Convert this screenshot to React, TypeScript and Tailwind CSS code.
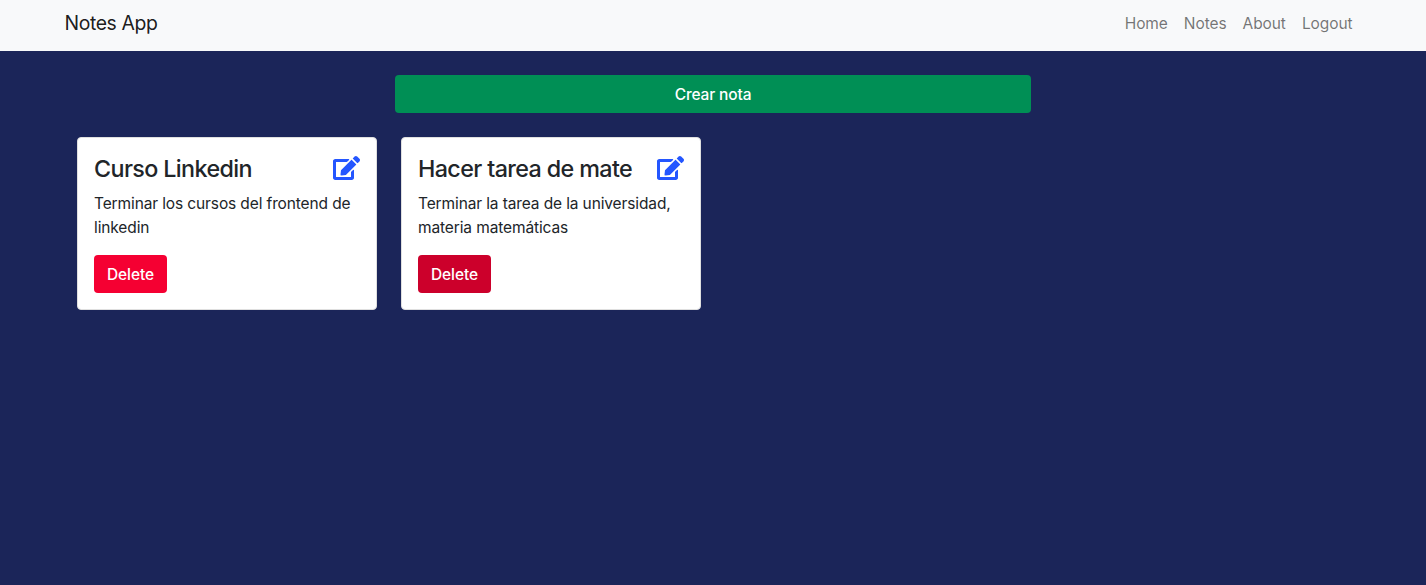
import { FaEdit } from "react-icons/fa";

type Note = { title: string; text: string; buttonClass: string };

const notes: Note[] = [
  {
    title: "Curso Linkedin",
    text: "Terminar los cursos del frontend de linkedin",
    buttonClass: "bg-[#f50032]",
  },
  {
    title: "Hacer tarea de mate",
    text: "Terminar la tarea de la universidad, materia matemáticas",
    buttonClass: "bg-[#cc002b]",
  },
];

const links = ["Home", "Notes", "About", "Logout"];

function NoteCard({ note }: { note: Note }) {
  return (
    <article className="h-[173px] w-[300px] rounded border border-[#dfdfdf] bg-white p-4">
      <div className="flex justify-between">
        <h5 className="mb-2 whitespace-nowrap text-[23.3px] leading-[29px] font-medium tracking-[-0.61px]">{note.title}</h5>
        <FaEdit className="mt-[2px] h-6 w-[27px] shrink-0 text-[#2456ff]" />
      </div>
      <p className="mt-px mb-[15px] h-12 text-[15.5px] leading-6 tracking-[-0.12px]">{note.text}</p>
      <button className={`h-[38px] w-[73px] rounded pt-[2px] text-[15.5px] leading-6 font-medium tracking-[-0.1px] text-white ${note.buttonClass}`}>Delete</button>
    </article>
  );
}

export default function App() {
  return (
    <div className="min-h-screen bg-[#1b2559] font-[Inter,sans-serif] text-[#212529]">
      <nav className="flex h-[51px] items-start justify-between bg-[#f8f9fa] pr-[73.5px] pl-[64.5px]">
        <a className="pt-2 text-[19.4px] leading-[30px] tracking-[-0.4px] text-black/90">Notes App</a>
        <ul className="flex gap-4 pt-3 text-[15.5px] leading-6 tracking-[-0.08px] text-black/55">
          {links.map((link) => (
            <li key={link}>{link}</li>
          ))}
        </ul>
      </nav>
      <main className="px-[77px] pt-6">
        <button className="mx-auto block h-[38px] w-[636px] rounded bg-[#008f55] pt-[2px] text-[15.5px] leading-6 font-medium tracking-[-0.15px] text-white">Crear nota</button>
        <section className="mt-6 flex gap-6">
          {notes.map((note) => (
            <NoteCard key={note.title} note={note} />
          ))}
        </section>
      </main>
    </div>
  );
}
